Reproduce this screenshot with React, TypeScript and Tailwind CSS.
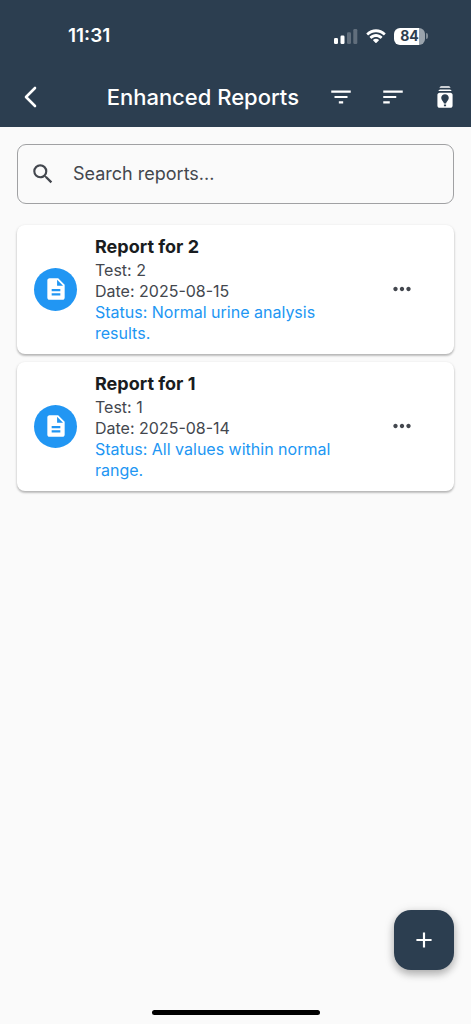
import type { ReactNode } from "react";
import {
  MdAdd,
  MdBatchPrediction,
  MdDescription,
  MdFilterList,
  MdMoreHoriz,
  MdSearch,
  MdSort,
} from "react-icons/md";

type Report = { id: number; test: string; date: string; status: string };

const reports: Report[] = [
  { id: 2, test: "2", date: "2025-08-15", status: "Normal urine analysis results." },
  { id: 1, test: "1", date: "2025-08-14", status: "All values within normal range." },
];

function StatusBar() {
  return (
    <div className="flex h-[66px] items-center justify-between pl-[68px] pr-[43px] pt-[6px]">
      <span className="text-[19px] font-semibold leading-6">11:31</span>
      <div className="flex items-center gap-2">
        <svg width="24" height="16" viewBox="0 0 24 16" fill="currentColor" aria-hidden="true">
          <rect x="0" y="10" width="4" height="6" rx="1.2" />
          <rect x="6.5" y="7.5" width="4" height="8.5" rx="1.2" />
          <rect x="13" y="4.2" width="4" height="11.8" rx="1.2" opacity="0.25" />
          <rect x="19.3" y="1" width="4" height="15" rx="1.2" opacity="0.25" />
        </svg>
        <svg width="20" height="15" viewBox="0 0 17 12.4" fill="currentColor" aria-hidden="true">
          <path d="M8.5 2.6c2.4 0 4.7.9 6.4 2.6.1.1.3.1.5 0l1.2-1.3c.1-.1.1-.4 0-.5-4.5-4.4-11.700-4.400-16.200 0-.1.1-.1.4 0 .5l1.200 1.300c.1.1.3.1.5 0 1.700-1.700 4-2.600 6.400-2.600zM8.500 6.700c1.300 0 2.600.5 3.600 1.400.1.1.3.1.5 0l1.200-1.300c.1-.1.1-.4 0-.5-3-2.900-7.600-2.900-10.600 0-.1.1-.1.400 0 .5l1.200 1.300c.2.1.4.1.5 0 1-.9 2.300-1.400 3.600-1.400zM10.900 9.500c.1-.1.1-.4 0-.5-1.400-1.200-3.400-1.200-4.800 0-.1.100-.1.400 0 .5l2.100 2.200c.1.1.4.1.5 0z" />
        </svg>
        <div className="flex items-center gap-px">
          <span className="flex h-[17px] w-[31px] items-center justify-center rounded-md bg-linear-to-r from-white from-82% to-[#9aa3ac] to-82% text-sm font-bold leading-4 text-[#2c3e50]">
            84
          </span>
          <span className="h-[6px] w-[2px] rounded-r-full bg-[#808b96]" />
        </div>
      </div>
    </div>
  );
}

function BarButton({ label, children }: { label: string; children: ReactNode }) {
  return (
    <button
      type="button"
      aria-label={label}
      className="flex size-[52px] shrink-0 items-center justify-center text-[26px]"
    >
      {children}
    </button>
  );
}

function ReportCard({ report }: { report: Report }) {
  return (
    <li className="flex items-center rounded-lg bg-white pb-[10px] pl-[17px] pr-[26px] pt-[9px] shadow-[0_1px_3px_rgba(0,0,0,0.18),0_2px_2px_rgba(0,0,0,0.16)]">
      <span className="flex size-[43px] shrink-0 items-center justify-center rounded-full bg-[#2196f3] text-[26px] text-white">
        <MdDescription />
      </span>
      <div className="ml-[18px] mr-4 min-w-0 flex-1 text-[16px] leading-[21px] text-[#43474e]">
        <h2 className="text-[18px] font-bold leading-[26px] text-[#191c20]">{`Report for ${report.id}`}</h2>
        <p>{`Test: ${report.test}`}</p>
        <p>{`Date: ${report.date}`}</p>
        <p className="text-[#2196f3]">{`Status: ${report.status}`}</p>
      </div>
      <button
        type="button"
        aria-label={`Options for report ${report.id}`}
        className="flex size-[52px] shrink-0 items-center justify-center text-[26px] text-[#43474e]"
      >
        <MdMoreHoriz />
      </button>
    </li>
  );
}

export default function App() {
  return (
    <div className="min-h-screen bg-[#fafafa] font-['Inter',sans-serif]">
      <header className="bg-[#2c3e50] text-white">
        <StatusBar />
        <div className="flex h-[61px] items-center">
          <button
            type="button"
            aria-label="Back"
            className="flex size-[61px] shrink-0 items-center justify-center"
          >
            <svg width="26" height="26" viewBox="0 0 26 26" fill="none" stroke="currentColor" strokeWidth="2.6" strokeLinecap="round" strokeLinejoin="round" aria-hidden="true">
              <path d="M17 4 8 13l9 9" />
            </svg>
          </button>
          <h1 className="flex-1 whitespace-nowrap pr-4 text-right text-[22px] font-medium leading-7">
            Enhanced Reports
          </h1>
          <BarButton label="Filter"><MdFilterList /></BarButton>
          <BarButton label="Sort"><MdSort /></BarButton>
          <BarButton label="Batch analysis"><MdBatchPrediction /></BarButton>
        </div>
      </header>

      <main className="px-[17px] pb-32 pt-[17px]">
        <label className="flex h-[60px] items-center rounded-[9px] border border-[#a0a1a3] pl-3 text-[#43474e]">
          <MdSearch className="size-[26px] shrink-0" />
          <input
            type="search"
            aria-label="Search reports"
            placeholder="Search reports..."
            className="ml-[17px] min-w-0 flex-1 bg-transparent text-[18px] leading-6 outline-none placeholder:text-[#43474e] placeholder:opacity-100"
          />
        </label>
        <ul className="mt-[21px] flex flex-col gap-2">
          {reports.map((r) => (
            <ReportCard key={r.id} report={r} />
          ))}
        </ul>
      </main>

      <button
        type="button"
        aria-label="Add report"
        className="fixed bottom-[54px] right-[17px] flex size-[60px] items-center justify-center rounded-[17px] bg-[#2c3e50] text-[26px] text-white shadow-[0_4px_8px_rgba(0,0,0,0.25),0_2px_12px_rgba(0,0,0,0.12)]"
      >
        <MdAdd />
      </button>
      <div className="fixed inset-x-0 bottom-[9px] flex justify-center">
        <span className="h-[5px] w-[168px] rounded-full bg-black" />
      </div>
    </div>
  );
}
